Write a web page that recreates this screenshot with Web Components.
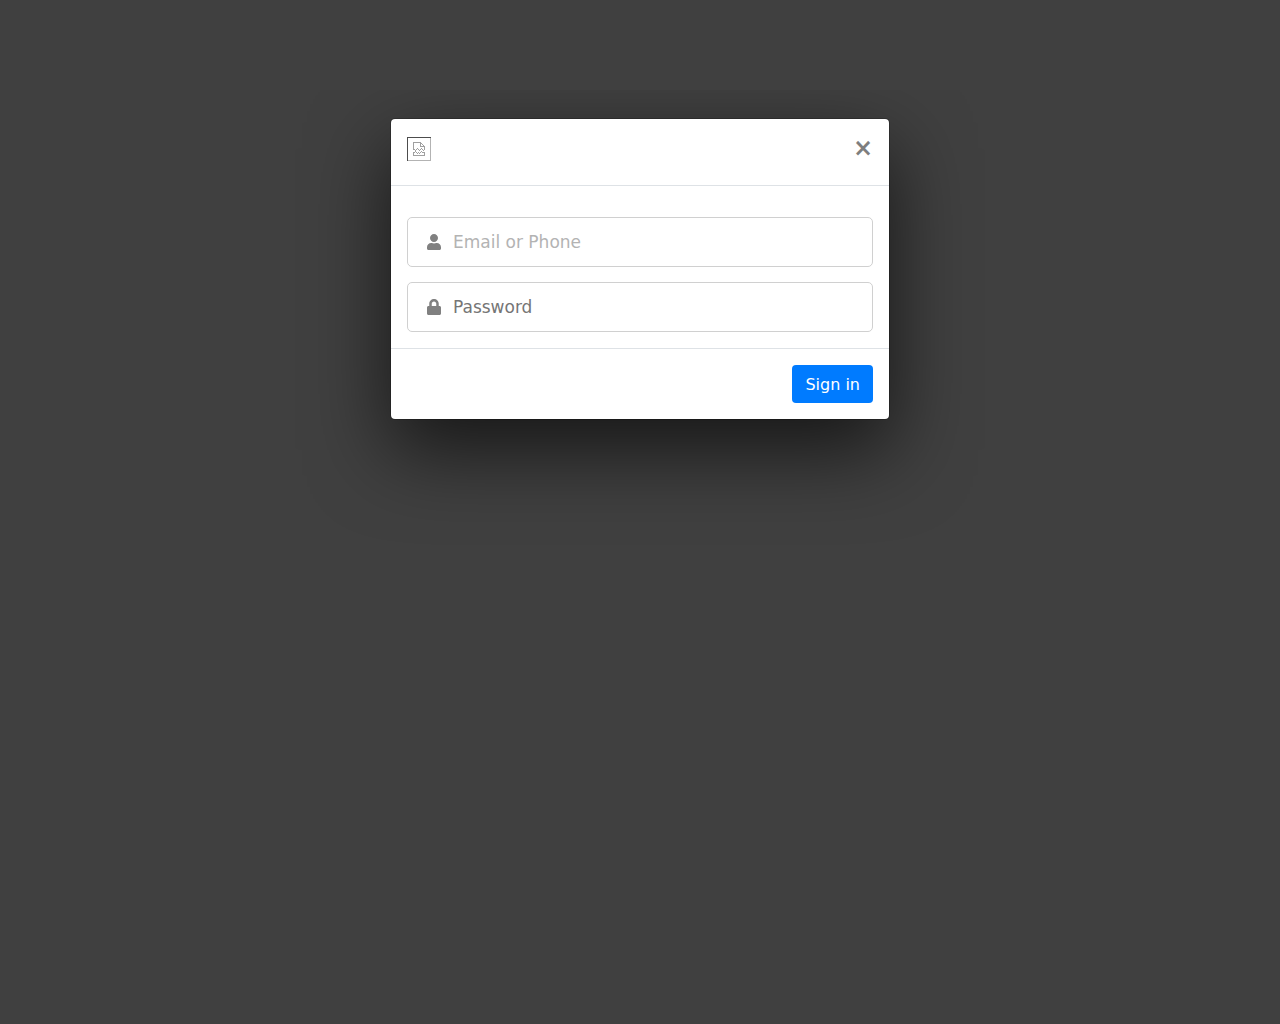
<!DOCTYPE html>
<html lang="en">
<head>
<meta charset="utf-8">
<meta name="viewport" content="width=device-width, initial-scale=1">
<title>Sign in</title>
<style>
  body { margin: 0; min-height: 100vh; background: #404040; color: #212529; font: 16px/24px "DejaVu Sans", sans-serif; }
</style>
</head>
<body>
<sign-in-page></sign-in-page>
<script>
const define = (name, html) => {
  const template = document.createElement('template');
  template.innerHTML = html;
  customElements.define(name, class extends HTMLElement {
    constructor() {
      super();
      this.attachShadow({ mode: 'open' }).append(template.content.cloneNode(true));
    }
    connectedCallback() {
      const input = this.shadowRoot.querySelector('input');
      if (!input) return;
      input.type = this.getAttribute('type') || 'text';
      input.placeholder = this.getAttribute('placeholder') || '';
      input.setAttribute('aria-label', input.placeholder);
    }
  });
};

define('missing-logo', `
  <style>
    :host { display: block; width: 24px; height: 24px; }
    svg { display: block; }
  </style>
  <svg width="24" height="24" viewBox="0 0 24 24" fill="none" shape-rendering="crispEdges" aria-hidden="true">
    <path d="M23.5 1V23.5H1" stroke="#b3b3b3"/>
    <path d="M.5 24V.5H24" stroke="#4d4d4d"/>
    <path d="M6.5 12V5.5H14M13.5 5V9.500H18M14 6.500H15M15 7.500H16M16 8.500H17M17.500 9V13M6 12.500H8M8 13.500H9M9 12.500H10M10 11.500H11M11 12.500H12M12 13.500H13M13 12.500H14M14 11.500H15M15 12.500H16M16 13.500H17M6.500 15V18.500H17.500V15M7 15.500H8M8 14.500H9M9 15.500H10M10 16.500H11M11 15.500H12M12 16.500H13M13 15.500H14M14 14.500H15M15 15.500H17" stroke="#a0a0a0"/>
  </svg>`);

define('text-field', `
  <style>
    :host { display: block; }
    label { display: flex; align-items: center; gap: 12px; height: 50px; box-sizing: border-box; padding: 0 19px; border: 1px solid #d0d0d0; border-radius: 5px; background: #fff; color: #808080; }
    input { flex: 1; min-width: 0; padding: 0; border: 0; outline: 0; background: none; color: #212529; font: inherit; font-size: 17px; }
    input::placeholder { color: var(--placeholder, #757575); opacity: 1; }
  </style>
  <label><slot name="icon"></slot><input></label>`);

define('modal-card', `
  <style>
    :host { display: block; box-sizing: border-box; max-width: 500px; margin: 28px auto; border: 1px solid rgba(0,0,0,.2); border-radius: 5px; background: #fff; background-clip: padding-box; box-shadow: 0 30px 80px rgba(0,0,0,.65); }
    header { display: flex; justify-content: space-between; align-items: flex-start; height: 66px; box-sizing: border-box; padding: 18px 16px; }
    main { display: flex; flex-direction: column; gap: 15px; padding: 31px 16px 16px; border: 1px solid #dee2e6; border-width: 1px 0; }
    footer { display: flex; justify-content: flex-end; padding: 16px; }
    header button { padding: 0; border: 0; background: none; color: #000; opacity: .5; font: inherit; font-size: 24px; font-weight: 700; line-height: 22px; text-shadow: 0 1px 0 #fff; }
  </style>
  <header><slot name="logo"></slot><button type="button" aria-label="Close">×</button></header>
  <main><slot></slot></main>
  <footer><slot name="actions"></slot></footer>`);

define('sign-in-page', `
  <style>
    :host { display: block; padding-top: 90px; }
    form { margin: 0; padding: 0 8px 200px; display: flow-root; overflow: hidden; }
    .email { --placeholder: #b3b3b3; }
    button { padding: 7px 13px 5px; border: 0; border-radius: 4px; background: #007bff; color: #fff; font: inherit; line-height: 26px; }
    svg { display: block; }
  </style>
  <form>
    <modal-card>
      <missing-logo slot="logo"></missing-logo>
      <text-field class="email" placeholder="Email or Phone">
        <svg slot="icon" width="14" height="16" viewBox="0 0 448 512" fill="currentColor" aria-hidden="true"><path d="M224 256c70.700 0 128-57.300 128-128S294.700 0 224 0 96 57.300 96 128s57.300 128 128 128zm89.600 32h-16.700c-22.200 10.200-46.900 16-72.900 16s-50.600-5.800-72.900-16h-16.700C60.200 288 0 348.200 0 422.400V464c0 26.500 21.500 48 48 48h352c26.500 0 48-21.500 48-48v-41.600c0-74.200-60.200-134.400-134.400-134.400z"/></svg>
      </text-field>
      <text-field type="password" placeholder="Password">
        <svg slot="icon" width="14" height="16" viewBox="0 0 448 512" fill="currentColor" aria-hidden="true"><path d="M400 224h-24v-72C376 68.200 307.800 0 224 0S72 68.200 72 152v72H48c-26.500 0-48 21.500-48 48v192c0 26.500 21.500 48 48 48h352c26.500 0 48-21.500 48-48V272c0-26.500-21.500-48-48-48zm-104 0H152v-72c0-39.700 32.300-72 72-72s72 32.300 72 72v72z"/></svg>
      </text-field>
      <button slot="actions" type="button">Sign in</button>
    </modal-card>
  </form>`);
</script>
</body>
</html>
